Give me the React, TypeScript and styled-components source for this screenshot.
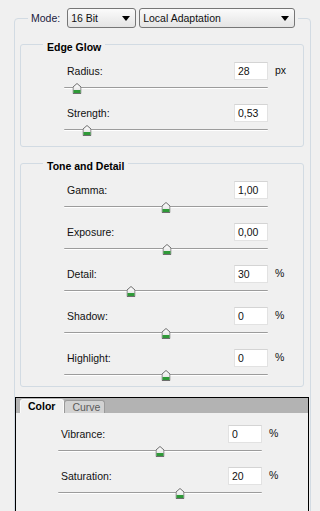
import styled, { createGlobalStyle } from "styled-components";

type Slider = { label: string; value: string; unit?: string; pos: number };

const edgeGlow: Slider[] = [
  { label: "Radius:", value: "28", unit: "px", pos: 6.5 },
  { label: "Strength:", value: "0,53", pos: 11.5 },
];

const toneDetail: Slider[] = [
  { label: "Gamma:", value: "1,00", pos: 50 },
  { label: "Exposure:", value: "0,00", pos: 50.5 },
  { label: "Detail:", value: "30", unit: "%", pos: 33 },
  { label: "Shadow:", value: "0", unit: "%", pos: 50 },
  { label: "Highlight:", value: "0", unit: "%", pos: 50 },
];

const colorTab: Slider[] = [
  { label: "Vibrance:", value: "0", unit: "%", pos: 50 },
  { label: "Saturation:", value: "20", unit: "%", pos: 60 },
];

const GlobalStyle = createGlobalStyle`
  html, body {
    margin: 0;
    background: #f0f0f0;
  }
  body {
    font-family: Tahoma, "Liberation Sans", Arial, sans-serif;
    font-size: 10.5px;
    color: #111;
  }
`;

const Page = styled.div`
  width: 320px;
  height: 511px;
  overflow: hidden;
  box-sizing: border-box;
  padding-left: 14px;
  background: #f0f0f0;
`;

const Outer = styled.fieldset`
  margin: 8px 0 0;
  width: 297px;
  min-width: 0;
  box-sizing: border-box;
  border: 1px solid #d2dbe3;
  border-radius: 4px;
  padding: 6px 6px 60px 5px;
`;

const ModeLegend = styled.legend`
  margin-left: 8px;
  padding: 0 3px;
  height: 20px;
  display: flex;
  align-items: center;
`;

const ModeLabel = styled.span`
  margin-right: 7px;
  color: #1a1a40;
`;

const Select = styled.div<{ $w: number }>`
  width: ${(p) => p.$w}px;
  height: 20px;
  box-sizing: border-box;
  border: 1px solid #767676;
  border-radius: 3px;
  background: linear-gradient(#fbfbfb, #e4e4e4);
  display: flex;
  align-items: center;
  justify-content: space-between;
  padding: 0 5px 0 3px;
  & + & {
    margin-left: 3px;
  }
`;

const Arrow = styled.span`
  width: 0;
  height: 0;
  border-left: 4px solid transparent;
  border-right: 4px solid transparent;
  border-top: 5px solid #000;
`;

const Group = styled.fieldset<{ $bottom: number }>`
  margin: 0;
  min-width: 0;
  border: 1px solid #d2dbe3;
  border-radius: 3px;
  padding: 8px 0 ${(p) => p.$bottom}px;
  & + & {
    margin-top: 6px;
  }
`;

const GroupTitle = styled.legend`
  margin-left: 22px;
  padding: 6px 4px 0;
  height: 20px;
  box-sizing: border-box;
  line-height: 14px;
  font-weight: bold;
  color: #000;
`;

const Rows = styled.div<{ $left: number }>`
  display: flex;
  flex-direction: column;
  gap: 10px;
  padding-left: ${(p) => p.$left}px;
`;

const Row = styled.div`
  display: grid;
  grid-template-columns: 204px 22px;
  grid-template-rows: 18px 11px;
  row-gap: 3px;
`;

const TopLine = styled.div`
  display: flex;
  align-items: center;
  justify-content: space-between;
`;

const Label = styled.span`
  padding-left: 3px;
  line-height: 18px;
`;

const NumberBox = styled.div`
  width: 34px;
  height: 18px;
  box-sizing: border-box;
  background: #fff;
  border: 1px solid #e2e2e2;
  border-top-color: #d4d4d4;
  padding-left: 3px;
  line-height: 16px;
`;

const Unit = styled.span`
  padding-left: 7px;
  line-height: 16px;
`;

const TrackCell = styled.div`
  grid-column: 1;
  position: relative;
`;

const Track = styled.div`
  margin-top: 4px;
  height: 2px;
  box-sizing: border-box;
  border-top: 1px solid #9c9c9c;
  border-bottom: 1px solid #fff;
  border-radius: 1px;
`;

const Thumb = styled.svg`
  position: absolute;
  top: 0;
  width: 9px;
  height: 11px;
  transform: translateX(-50%);
`;

const TabPanel = styled.div`
  margin: 10px -5px 0;
  border: 1px solid #000;
  border-bottom: none;
  background: #f0f0f0;
`;

const TabStrip = styled.div`
  height: 15px;
  background: #b3b3b3;
  display: flex;
  align-items: flex-end;
  padding-left: 4px;
`;

const Tab = styled.div<{ $active?: boolean }>`
  height: ${(p) => (p.$active ? 14 : 13)}px;
  box-sizing: border-box;
  padding: 0 ${(p) => (p.$active ? 8 : 4)}px 0 7px;
  border: 1px solid ${(p) => (p.$active ? "#fafafa" : "#9a9a9a")};
  border-bottom: none;
  border-radius: 3px 3px 0 0;
  background: ${(p) => (p.$active ? "#f0f0f0" : "#d2d2d2")};
  color: ${(p) => (p.$active ? "#000" : "#5a5a5a")};
  font-weight: ${(p) => (p.$active ? "bold" : "normal")};
  line-height: 13px;
`;

const TabBody = styled.div`
  padding: 12px 0 40px;
`;

const SliderThumb = () => (
  <svg viewBox="0 0 9 11" width="9" height="11">
    <defs>
      <linearGradient id="thumbFace" x1="0" y1="0" x2="0" y2="1">
        <stop offset="0" stopColor="#ffffff" />
        <stop offset="1" stopColor="#dcdcdc" />
      </linearGradient>
    </defs>
    <path d="M0.5 4 L4.5 0.5 L8.5 4 L8.5 10.5 L0.5 10.5 Z" fill="url(#thumbFace)" stroke="#6d6d6d" />
    <rect x="1" y="7" width="7" height="3" fill="#2f9a38" />
  </svg>
);

const SliderRow = ({ s }: { s: Slider }) => (
  <Row>
    <TopLine>
      <Label>{s.label}</Label>
      <NumberBox>{s.value}</NumberBox>
    </TopLine>
    <Unit>{s.unit}</Unit>
    <TrackCell>
      <Track />
      <Thumb as="div" style={{ left: `${s.pos}%` }}>
        <SliderThumb />
      </Thumb>
    </TrackCell>
  </Row>
);

export default function App() {
  return (
    <Page>
      <GlobalStyle />
      <Outer>
        <ModeLegend>
          <ModeLabel>Mode:</ModeLabel>
          <Select $w={69}>
            <span>16 Bit</span>
            <Arrow />
          </Select>
          <Select $w={156}>
            <span>Local Adaptation</span>
            <Arrow />
          </Select>
        </ModeLegend>

        <Group $bottom={10}>
          <GroupTitle>Edge Glow</GroupTitle>
          <Rows $left={43}>
            {edgeGlow.map((s) => (
              <SliderRow key={s.label} s={s} />
            ))}
          </Rows>
        </Group>

        <Group $bottom={5}>
          <GroupTitle>Tone and Detail</GroupTitle>
          <Rows $left={43}>
            {toneDetail.map((s) => (
              <SliderRow key={s.label} s={s} />
            ))}
          </Rows>
        </Group>

        <TabPanel>
          <TabStrip>
            <Tab $active>Color</Tab>
            <Tab>Curve</Tab>
          </TabStrip>
          <TabBody>
            <Rows $left={42}>
              {colorTab.map((s) => (
                <SliderRow key={s.label} s={s} />
              ))}
            </Rows>
          </TabBody>
        </TabPanel>
      </Outer>
    </Page>
  );
}
